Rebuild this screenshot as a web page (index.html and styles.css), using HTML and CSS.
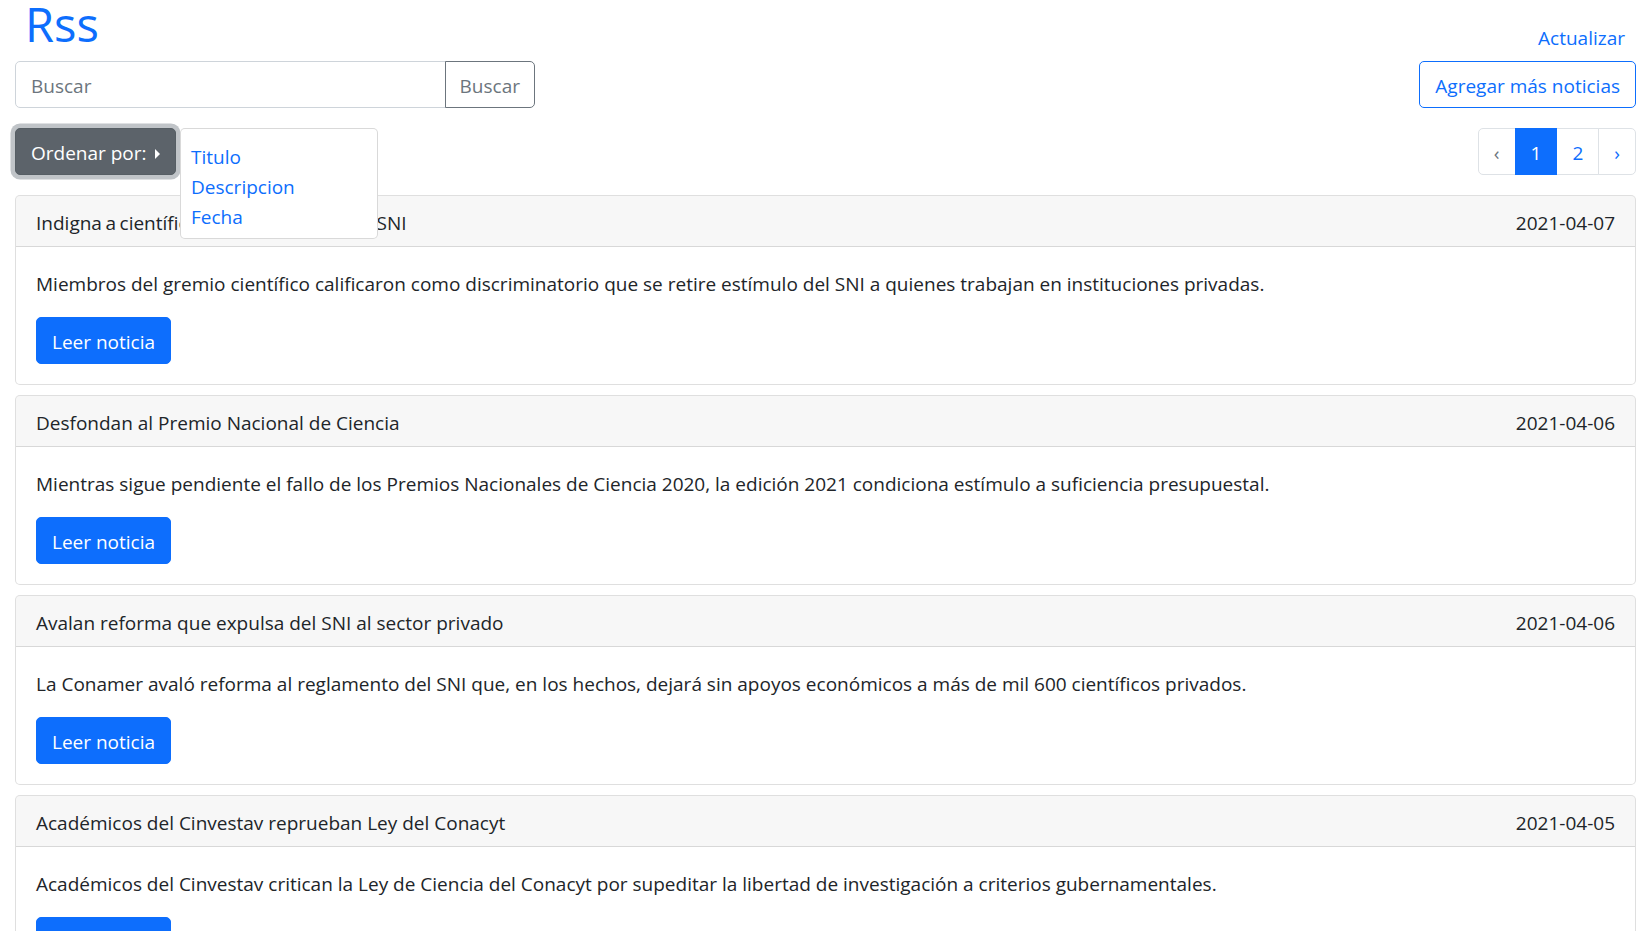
FILE: index.html
```html
<!DOCTYPE html>
<html lang="es">
<head>
<meta charset="utf-8">
<title>Rss</title>
<link rel="stylesheet" href="styles.css">
</head>
<body>
<div class="page">
  <div class="top-row">
    <h1 class="brand">Rss</h1>
    <a class="refresh" href="#">Actualizar</a>
  </div>
  <div class="search-row">
    <form class="search-group">
      <input class="search-input" type="text" placeholder="Buscar">
      <button class="btn btn-outline-secondary search-btn" type="button">Buscar</button>
    </form>
    <button class="btn btn-outline-primary" type="button">Agregar más noticias</button>
  </div>
  <div class="tools-row">
    <div class="dropend">
      <button class="btn btn-secondary-active" type="button">Ordenar por:<span class="caret"></span></button>
      <div class="dropdown-menu">
        <a class="dropdown-item" href="#">Titulo</a>
        <a class="dropdown-item" href="#">Descripcion</a>
        <a class="dropdown-item" href="#">Fecha</a>
      </div>
    </div>
    <ul class="pagination">
      <li class="page-item disabled"><span class="page-link">‹</span></li>
      <li class="page-item active"><span class="page-link">1</span></li>
      <li class="page-item"><a class="page-link" href="#">2</a></li>
      <li class="page-item"><a class="page-link" href="#">›</a></li>
    </ul>
  </div>

  <div class="card">
    <div class="card-header"><span class="title-tight">Indigna a científicos las exclusiones del SNI</span><span>2021-04-07</span></div>
    <div class="card-body">
      <p class="card-text">Miembros del gremio científico calificaron como discriminatorio que se retire estímulo del SNI a quienes trabajan en instituciones privadas.</p>
      <a class="btn btn-primary" href="#">Leer noticia</a>
    </div>
  </div>
  <div class="card">
    <div class="card-header"><span>Desfondan al Premio Nacional de Ciencia</span><span>2021-04-06</span></div>
    <div class="card-body">
      <p class="card-text">Mientras sigue pendiente el fallo de los Premios Nacionales de Ciencia 2020, la edición 2021 condiciona estímulo a suficiencia presupuestal.</p>
      <a class="btn btn-primary" href="#">Leer noticia</a>
    </div>
  </div>
  <div class="card">
    <div class="card-header"><span>Avalan reforma que expulsa del SNI al sector privado</span><span>2021-04-06</span></div>
    <div class="card-body">
      <p class="card-text">La Conamer avaló reforma al reglamento del SNI que, en los hechos, dejará sin apoyos económicos a más de mil 600 científicos privados.</p>
      <a class="btn btn-primary" href="#">Leer noticia</a>
    </div>
  </div>
  <div class="card">
    <div class="card-header"><span>Académicos del Cinvestav reprueban Ley del Conacyt</span><span>2021-04-05</span></div>
    <div class="card-body">
      <p class="card-text">Académicos del Cinvestav critican la Ley de Ciencia del Conacyt por supeditar la libertad de investigación a criterios gubernamentales.</p>
      <a class="btn btn-primary" href="#">Leer noticia</a>
    </div>
  </div>
</div>
</body>
</html>
```
FILE: styles.css
```css
html, body {
  margin: 0;
  padding: 0;
  overflow: hidden;
  background: #fff;
}
body {
  font-family: "Open Sans", "Noto Sans", sans-serif;
  font-size: 19px;
  line-height: 30px;
  color: #212529;
}
.page {
  padding: 0 3px 0 15px;
}
a { color: #0d6efd; text-decoration: none; }

.top-row {
  display: flex;
  justify-content: space-between;
  align-items: flex-start;
  height: 61px;
}
.brand {
  margin: 0 0 0 10px;
  font-size: 47px;
  line-height: 48px;
  font-weight: 400;
  color: #0d6efd;
}
.refresh {
  margin-top: 23px;
  padding-right: 11px;
}

.btn {
  display: inline-block;
  box-sizing: border-box;
  font-family: inherit;
  font-size: 19px;
  line-height: 30px;
  padding: 8.5px 15px 6.5px;
  border: 1px solid transparent;
  border-radius: 5px;
  background: transparent;
  cursor: pointer;
  text-align: center;
}
.btn-outline-secondary { color: #6c757d; border-color: #6c757d; }
.btn-outline-primary { color: #0d6efd; border-color: #0d6efd; }
.btn-primary { color: #fff; background: #0d6efd; border-color: #0d6efd; }
.btn-secondary-active {
  color: #fff;
  background: #5c636a;
  border-color: #565e64;
  box-shadow: 0 0 0 4.5px rgba(130, 138, 145, 0.5);
}
.caret {
  display: inline-block;
  margin-left: 8px;
  width: 0;
  height: 0;
  border-top: 5.5px solid transparent;
  border-bottom: 5.5px solid transparent;
  border-left: 5.5px solid #fff;
  vertical-align: 1px;
}

.search-row {
  display: flex;
  justify-content: space-between;
  align-items: flex-start;
}
.search-group {
  display: flex;
  width: 520px;
  margin: 0;
}
.search-input {
  flex: 1;
  min-width: 0;
  box-sizing: border-box;
  height: 47px;
  font-family: inherit;
  font-size: 19px;
  line-height: 30px;
  padding: 8.5px 15px 6.5px;
  border: 1px solid #ced4da;
  border-radius: 5px 0 0 5px;
  color: #212529;
  outline: none;
}
.search-input::placeholder { color: #6c757d; }
.search-btn {
  border-radius: 0 5px 5px 0;
  margin-left: -1px;
  height: 47px;
  padding-left: 14px;
  padding-right: 14px;
}

.tools-row {
  display: flex;
  justify-content: space-between;
  align-items: flex-start;
  margin-top: 20px;
  margin-bottom: 20px;
}
.dropend {
  position: relative;
}
.dropend .btn {
  height: 47px;
}
.dropdown-menu {
  position: absolute;
  left: 165px;
  top: 0;
  z-index: 10;
  width: 198px;
  box-sizing: border-box;
  padding: 13px 0 6px;
  background: #fff;
  border: 1px solid rgba(0, 0, 0, 0.15);
  border-radius: 5px;
}
.dropdown-item {
  display: block;
  padding: 0 10px;
  color: #0d6efd;
  white-space: nowrap;
}

.pagination {
  display: flex;
  list-style: none;
  margin: 0;
  padding: 0;
}
.page-link {
  display: block;
  box-sizing: border-box;
  height: 47px;
  padding: 8.5px 15px 6.5px;
  border: 1px solid #dee2e6;
  margin-left: -1px;
  color: #0d6efd;
  background: #fff;
}
.page-item:first-child .page-link {
  margin-left: 0;
  border-radius: 5px 0 0 5px;
}
.page-item:last-child .page-link {
  border-radius: 0 5px 5px 0;
}
.page-item.disabled .page-link { color: #6c757d; }
.page-item.active .page-link {
  color: #fff;
  background: #0d6efd;
  border-color: #0d6efd;
  position: relative;
}

.card {
  border: 1px solid rgba(0, 0, 0, 0.125);
  border-radius: 5px;
  margin-bottom: 10px;
  background: #fff;
}
.card-header {
  display: flex;
  justify-content: space-between;
  padding: 12px 20px 8px;
  background: rgba(0, 0, 0, 0.03);
  border-bottom: 1px solid rgba(0, 0, 0, 0.125);
  border-radius: 4px 4px 0 0;
}
.title-tight {
  word-spacing: -1.4px;
}
.card-body {
  padding: 22px 20px 20px;
}
.card-text {
  margin: 0 0 18px;
}
.card-body .btn {
  height: 47px;
}
```
